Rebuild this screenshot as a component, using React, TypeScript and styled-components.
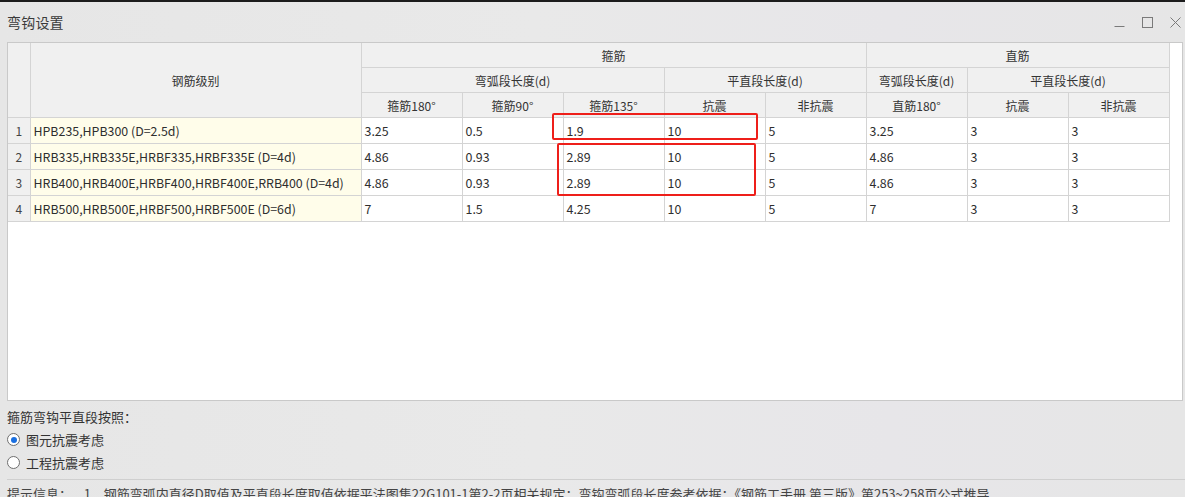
import * as React from "react";
import styled, { createGlobalStyle } from "styled-components";

const GlobalStyle = createGlobalStyle`
  html, body {
    margin: 0;
    padding: 0;
    background: #e8e8e8;
    overflow: hidden;
  }
  body {
    font-family: "Noto Sans CJK SC", "Noto Sans", sans-serif;
    color: #333;
  }
`;

const Window = styled.div`
  width: 1185px;
  height: 497px;
  display: flex;
  flex-direction: column;
  overflow: hidden;
  background: linear-gradient(90deg, #e6e6e6 0%, #e9e9e9 45%, #e7e6e9 75%, #e6e6e6 100%);
`;

const TopStrip = styled.div`
  height: 2px;
  flex: none;
  background: #1c1c1c;
`;

const TitleBar = styled.div`
  height: 40px;
  flex: none;
  display: flex;
  align-items: center;
  justify-content: space-between;
  padding: 0 4px 0 7px;
`;

const Title = styled.div`
  font-size: 14px;
  color: #3a3a3a;
  letter-spacing: 0.2px;
`;

const Controls = styled.div`
  display: flex;
  align-items: center;
  gap: 17px;
  margin-top: 0;
`;

const ControlIcon = styled.svg`
  width: 11px;
  height: 11px;
  display: block;
  stroke: #7a7a7a;
  fill: none;
`;

const Panel = styled.div`
  margin: 0 2px 0 7px;
  height: 359px;
  flex: none;
  background: #fff;
  border: 1px solid #c9c9c9;
  box-sizing: border-box;
  position: relative;
`;

const Grid = styled.table`
  border-collapse: collapse;
  table-layout: fixed;
  font-size: 12px;
`;

const HeadCell = styled.th`
  background: #f0f0f0;
  font-weight: normal;
  font-size: 12px;
  color: #333;
  height: 24px;
  padding: 0;
  text-align: center;
  border-right: 1px solid #d4d4d4;
  border-bottom: 1px solid #d4d4d4;
  white-space: nowrap;
`;

const IndexCell = styled.td`
  background: #f0f0f0;
  text-align: center;
  font-size: 12px;
  color: #444;
  padding: 0;
  border-right: 1px solid #d4d4d4;
  border-bottom: 1px solid #d4d4d4;
`;

const Cell = styled.td<{ $name?: boolean }>`
  height: 25px;
  padding: 0 0 0 3px;
  font-size: 12.4px;
  color: #2e2e2e;
  background: ${({ $name }) => ($name ? "#fffdea" : "#fff")};
  border-right: 1px solid #d4d4d4;
  border-bottom: 1px solid #d4d4d4;
  white-space: nowrap;
  overflow: hidden;
`;

const Mark = styled.div<{ $l: number; $t: number; $w: number; $h: number }>`
  position: absolute;
  left: ${({ $l }) => $l}px;
  top: ${({ $t }) => $t}px;
  width: ${({ $w }) => $w}px;
  height: ${({ $h }) => $h}px;
  border: 2px solid #ee1f1a;
  border-radius: 2px;
  box-sizing: border-box;
  pointer-events: none;
`;

const Options = styled.div`
  padding: 6px 7px 0;
  display: flex;
  flex-direction: column;
  gap: 2px;
  font-size: 13px;
  color: #333;
`;

const OptionLabel = styled.div`
  height: 20px;
  line-height: 20px;
`;

const RadioRow = styled.label`
  display: flex;
  align-items: center;
  gap: 6px;
  height: 21px;
`;

const RadioDot = styled.span<{ $on?: boolean }>`
  width: 13px;
  height: 13px;
  box-sizing: border-box;
  border-radius: 50%;
  border: 1px solid #6f6f6f;
  background: #fff;
  display: flex;
  align-items: center;
  justify-content: center;

  &::after {
    content: "";
    width: 6px;
    height: 6px;
    border-radius: 50%;
    background: ${({ $on }) => ($on ? "#1a6fe0" : "transparent")};
  }
`;

const Divider = styled.div`
  margin: 6px 0 0 7px;
  height: 1px;
  flex: none;
  background: #cfcfcf;
`;

const Hint = styled.div`
  padding: 4px 7px 0;
  font-size: 13px;
  color: #444;
  white-space: nowrap;
`;

const colWidths = [22, 331, 101, 101, 101, 101, 101, 101, 101, 101];

const rows = [
  ["HPB235,HPB300 (D=2.5d)", "3.25", "0.5", "1.9", "10", "5", "3.25", "3", "3"],
  ["HRB335,HRB335E,HRBF335,HRBF335E (D=4d)", "4.86", "0.93", "2.89", "10", "5", "4.86", "3", "3"],
  ["HRB400,HRB400E,HRBF400,HRBF400E,RRB400 (D=4d)", "4.86", "0.93", "2.89", "10", "5", "4.86", "3", "3"],
  ["HRB500,HRB500E,HRBF500,HRBF500E (D=6d)", "7", "1.5", "4.25", "10", "5", "7", "3", "3"],
];

export default function App() {
  const [mode, setMode] = React.useState("element");

  return (
    <>
      <GlobalStyle />
      <Window>
        <TopStrip />
        <TitleBar>
          <Title>弯钩设置</Title>
          <Controls>
            <ControlIcon viewBox="0 0 11 11">
              <path d="M0.5 9.5H10.5" />
            </ControlIcon>
            <ControlIcon viewBox="0 0 11 11">
              <rect x="0.5" y="0.5" width="10" height="10" />
            </ControlIcon>
            <ControlIcon viewBox="0 0 11 11">
              <path d="M0.5 0.5L10.5 10.5M10.5 0.5L0.5 10.5" />
            </ControlIcon>
          </Controls>
        </TitleBar>

        <Panel>
          <Grid>
            <colgroup>
              {colWidths.map((w, i) => (
                <col key={i} style={{ width: w }} />
              ))}
            </colgroup>
            <thead>
              <tr>
                <HeadCell rowSpan={3} />
                <HeadCell rowSpan={3}>钢筋级别</HeadCell>
                <HeadCell colSpan={5}>箍筋</HeadCell>
                <HeadCell colSpan={3}>直筋</HeadCell>
              </tr>
              <tr>
                <HeadCell colSpan={3}>弯弧段长度(d)</HeadCell>
                <HeadCell colSpan={2}>平直段长度(d)</HeadCell>
                <HeadCell>弯弧段长度(d)</HeadCell>
                <HeadCell colSpan={2}>平直段长度(d)</HeadCell>
              </tr>
              <tr>
                <HeadCell>箍筋180°</HeadCell>
                <HeadCell>箍筋90°</HeadCell>
                <HeadCell>箍筋135°</HeadCell>
                <HeadCell>抗震</HeadCell>
                <HeadCell>非抗震</HeadCell>
                <HeadCell>直筋180°</HeadCell>
                <HeadCell>抗震</HeadCell>
                <HeadCell>非抗震</HeadCell>
              </tr>
            </thead>
            <tbody>
              {rows.map((r, i) => (
                <tr key={i}>
                  <IndexCell>{i + 1}</IndexCell>
                  {r.map((v, j) => (
                    <Cell key={j} $name={j === 0}>
                      {v}
                    </Cell>
                  ))}
                </tr>
              ))}
            </tbody>
          </Grid>
          <Mark $l={544} $t={70} $w={206} $h={27} />
          <Mark $l={549} $t={100} $w={199} $h={53} />
        </Panel>

        <Options>
          <OptionLabel>箍筋弯钩平直段按照：</OptionLabel>
          <RadioRow onClick={() => setMode("element")}>
            <RadioDot $on={mode === "element"} />
            图元抗震考虑
          </RadioRow>
          <RadioRow onClick={() => setMode("project")}>
            <RadioDot $on={mode === "project"} />
            工程抗震考虑
          </RadioRow>
        </Options>
        <Divider />
        <Hint>
          提示信息：&nbsp;&nbsp;&nbsp;&nbsp;1、钢筋弯弧内直径D取值及平直段长度取值依据平法图集22G101-1第2-2页相关规定；弯钩弯弧段长度参考依据：《钢筋工手册 第三版》第253~258页公式推导
        </Hint>
      </Window>
    </>
  );
}
